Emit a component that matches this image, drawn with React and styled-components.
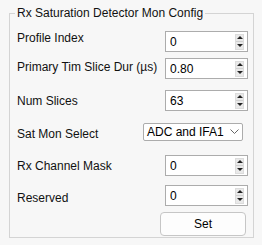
import React from "react";
import styled, { createGlobalStyle } from "styled-components";

const GlobalStyle = createGlobalStyle`
  html, body {
    margin: 0;
    padding: 0;
    background: #f7f7f7;
  }
  body {
    font-family: "Liberation Sans", Arial, sans-serif;
    font-size: 12px;
    color: #111;
  }
`

const Panel = styled.fieldset`
  box-sizing: border-box;
  width: 245px;
  height: 232px;
  margin: 6px 0 0 9px;
  padding: 0;
  border: 1px solid #d4d4d4;
  min-inline-size: 0;
`

const Title = styled.legend`
  margin-left: 5px;
  padding: 0 2px;
  font-size: 12px;
  line-height: 14px;
  color: #111;
`

const Body = styled.div`
  display: flex;
  flex-direction: column;
  padding: 0 5px 0 7px;
`

const Row = styled.div`
  display: flex;
  align-items: center;
  justify-content: space-between;
  height: ${p => p.$h || 21}px;
  margin-top: ${p => p.$top}px;
`

const Label = styled.span`
  white-space: nowrap;
  line-height: 14px;
  margin-top: ${p => (p.$dy > 0 ? p.$dy * 2 : 0)}px;
  margin-bottom: ${p => (p.$dy < 0 ? -p.$dy * 2 : 0)}px;
`

const SpinBox = styled.div`
  box-sizing: border-box;
  display: flex;
  align-items: center;
  width: 83px;
  height: 100%;
  background: #fff;
  border: 1px solid #acacac;
`

const Value = styled.input`
  flex: 1;
  min-width: 0;
  border: none;
  outline: none;
  background: transparent;
  padding: 0 0 0 4px;
  font-family: "Liberation Sans", Arial, sans-serif;
  font-size: 12px;
  color: #000;
`

const Stepper = styled.div`
  display: flex;
  flex-direction: column;
  width: 9px;
  height: 16px;
  margin-right: 3px;
  background: #e9e9e9;
  border: 1px solid #dcdcdc;
  box-sizing: border-box;
`

const StepHalf = styled.div`
  flex: 1;
  display: flex;
  align-items: center;
  justify-content: center;
  & + & {
    border-top: 1px solid #d0d0d0;
  }
`

const Arrow = styled.span`
  width: 0;
  height: 0;
  border-left: 3px solid transparent;
  border-right: 3px solid transparent;
  ${p => p.$up
    ? "border-bottom: 3px solid #222;"
    : "border-top: 3px solid #222;"}
`

const Select = styled.div`
  box-sizing: border-box;
  display: flex;
  align-items: center;
  justify-content: space-between;
  width: 100px;
  height: 100%;
  margin-right: 5px;
  padding: 0 3px 0 3px;
  background: #fff;
  border: 1px solid #acacac;
  border-radius: 2px;
  font-size: 12px;
  color: #000;
`

const Button = styled.button`
  box-sizing: border-box;
  width: 86px;
  height: 100%;
  margin: 0 2px 0 auto;
  background: #fdfdfd;
  border: 1px solid #c6c6c6;
  border-radius: 4px;
  font-family: "Liberation Sans", Arial, sans-serif;
  font-size: 12px;
  color: #000;
`

function Spinner({ value }) {
  return (
    <SpinBox>
      <Value readOnly value={value} />
      <Stepper>
        <StepHalf><Arrow $up /></StepHalf>
        <StepHalf><Arrow /></StepHalf>
      </Stepper>
    </SpinBox>
  )
}

const fields = [
  { label: "Profile Index", value: "0", top: 11, dy: -4 },
  { label: "Primary Tim Slice Dur (\u00b5s)", value: "0.80", top: 6, dy: -2 },
  { label: "Num Slices", value: "63", top: 11, dy: 0 },
]

const lower = [
  { label: "Rx Channel Mask", value: "0", top: 14, dy: 0 },
  { label: "Reserved", value: "0", top: 9, dy: 2 },
]

export default function App() {
  return (
    <>
      <GlobalStyle />
      <Panel>
        <Title>Rx Saturation Detector Mon Config</Title>
        <Body>
          {fields.map(f => (
            <Row key={f.label} $top={f.top}>
              <Label $dy={f.dy}>{f.label}</Label>
              <Spinner value={f.value} />
            </Row>
          ))}
          <Row $top={12} $h={18}>
            <Label $dy={2}>Sat Mon Select</Label>
            <Select>
              <span>ADC and IFA1</span>
              <svg width="9" height="6" viewBox="0 0 9 6">
                <polyline points="0.5,0.5 4.5,4.5 8.5,0.5" fill="none" stroke="#666" strokeWidth="1" />
              </svg>
            </Select>
          </Row>
          {lower.map(f => (
            <Row key={f.label} $top={f.top}>
              <Label $dy={f.dy}>{f.label}</Label>
              <Spinner value={f.value} />
            </Row>
          ))}
          <Row $top={6} $h={24}>
            <Button>Set</Button>
          </Row>
        </Body>
      </Panel>
    </>
  )
}
